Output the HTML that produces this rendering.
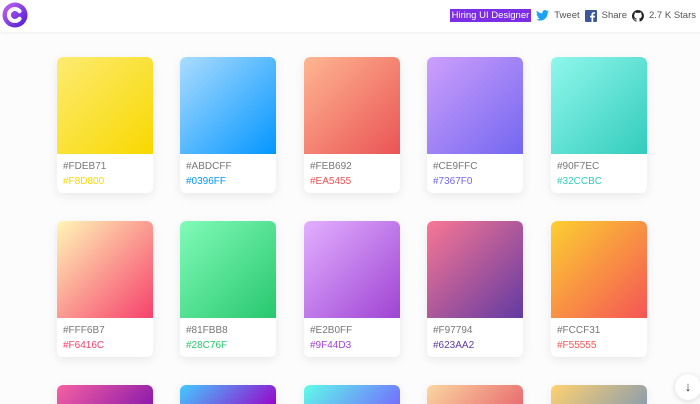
<!DOCTYPE html>
<html><head><meta charset="utf-8"><style>
html,body{margin:0;width:700px;height:404px;overflow:hidden}
body{background:#fcfcfd;font-family:"Liberation Sans",sans-serif}
.wrap{position:relative;width:700px;height:404px;overflow:hidden}
.hdr{position:absolute;left:0;top:0;width:700px;height:32px;background:#fff;box-shadow:0 1px 3px rgba(0,0,0,.06);z-index:2}
.logo{position:absolute;left:2px;top:2px}
.nav{position:absolute;right:4px;top:9px;font-size:9.5px;color:#555;display:flex;align-items:center;gap:5px}
.hire{background:#7b2ee6;color:#fff;padding:1px 2px}
.card{position:absolute;width:96px;height:136px;background:#fff;border-radius:6px;box-shadow:0 3px 10px rgba(0,0,0,.08);overflow:hidden}
.card.s{height:19px;border-radius:6px 6px 0 0}
.g{height:97px;border-radius:6px 6px 0 0}
.t{font-size:10px;line-height:15px;padding:5px 0 0 6px;color:#777}
.arrow{position:absolute;left:675px;top:374px;width:26px;height:26px;border-radius:50%;background:#fff;box-shadow:0 1px 6px rgba(0,0,0,.15);text-align:center;font-size:13px;line-height:26px;color:#333;z-index:3}
</style></head><body><div class="wrap">
<div class="hdr"><svg class="logo" width="26" height="26" viewBox="0 0 26 26"><defs><linearGradient id="lg" x1="0" y1="0" x2="1" y2="1"><stop offset="0" stop-color="#c86af5"/><stop offset="1" stop-color="#4a16d0"/></linearGradient></defs><circle cx="13" cy="13" r="12.5" fill="url(#lg)"/><path d="M17.5 9.2A6 6 0 1 0 17.5 16.8" fill="none" stroke="#fff" stroke-width="4" stroke-linecap="round"/></svg>
<div class="nav"><span class="hire">Hiring UI Designer</span>
<svg width="13" height="11" viewBox="0 0 24 20"><path fill="#1da1f2" d="M24 2.4a10 10 0 0 1-2.8.8A5 5 0 0 0 23.3.4a10 10 0 0 1-3.1 1.2A4.9 4.9 0 0 0 11.8 6 14 14 0 0 1 1.7.9a4.9 4.9 0 0 0 1.5 6.6A4.9 4.9 0 0 1 1 6.9a4.9 4.9 0 0 0 3.9 4.8 5 5 0 0 1-2.2.1 4.9 4.9 0 0 0 4.6 3.4A9.9 9.9 0 0 1 0 17.2 14 14 0 0 0 7.5 19.4c9.1 0 14-7.5 14-14v-.6A10 10 0 0 0 24 2.4z"/></svg><span>Tweet</span>
<svg width="12" height="12" viewBox="0 0 24 24"><rect width="24" height="24" rx="2" fill="#3b5998"/><path fill="#fff" d="M16.5 24v-9h3l.5-3.5h-3.5V9.3c0-1 .3-1.7 1.7-1.7h1.9V4.5a25 25 0 0 0-2.7-.1c-2.7 0-4.5 1.6-4.5 4.6v2.5H10V15h3v9z"/></svg><span>Share</span>
<svg width="12" height="12" viewBox="0 0 16 16"><path fill="#222" d="M8 0a8 8 0 0 0-2.5 15.6c.4 0 .5-.2.5-.4v-1.5c-2.2.5-2.7-1-2.7-1-.4-.9-.9-1.2-.9-1.2-.7-.5.1-.5.1-.5.8.1 1.2.8 1.2.8.7 1.3 1.9.9 2.3.7.1-.5.3-.9.5-1.1-1.8-.2-3.6-.9-3.6-4 0-.9.3-1.6.8-2.1-.1-.2-.4-1 .1-2.1 0 0 .7-.2 2.2.8a7.5 7.5 0 0 1 4 0c1.5-1 2.2-.8 2.2-.8.4 1.1.2 1.9.1 2.1.5.6.8 1.3.8 2.1 0 3.1-1.9 3.8-3.6 4 .3.3.6.8.6 1.5v2.2c0 .2.1.5.6.4A8 8 0 0 0 8 0z"/></svg><span>2.7 K Stars</span></div></div>

<div class="card" style="left:57px;top:57px"><div class="g" style="background:linear-gradient(135deg,#FDEB71,#F8D800)"></div><div class="t">#FDEB71<br><span style="color:#F8D800">#F8D800</span></div></div>
<div class="card" style="left:180px;top:57px"><div class="g" style="background:linear-gradient(135deg,#ABDCFF,#0396FF)"></div><div class="t">#ABDCFF<br><span style="color:#0396FF">#0396FF</span></div></div>
<div class="card" style="left:304px;top:57px"><div class="g" style="background:linear-gradient(135deg,#FEB692,#EA5455)"></div><div class="t">#FEB692<br><span style="color:#EA5455">#EA5455</span></div></div>
<div class="card" style="left:427px;top:57px"><div class="g" style="background:linear-gradient(135deg,#CE9FFC,#7367F0)"></div><div class="t">#CE9FFC<br><span style="color:#7367F0">#7367F0</span></div></div>
<div class="card" style="left:551px;top:57px"><div class="g" style="background:linear-gradient(135deg,#90F7EC,#32CCBC)"></div><div class="t">#90F7EC<br><span style="color:#32CCBC">#32CCBC</span></div></div>

<div class="card" style="left:57px;top:221px"><div class="g" style="background:linear-gradient(135deg,#FFF6B7,#F6416C)"></div><div class="t">#FFF6B7<br><span style="color:#F6416C">#F6416C</span></div></div>
<div class="card" style="left:180px;top:221px"><div class="g" style="background:linear-gradient(135deg,#81FBB8,#28C76F)"></div><div class="t">#81FBB8<br><span style="color:#28C76F">#28C76F</span></div></div>
<div class="card" style="left:304px;top:221px"><div class="g" style="background:linear-gradient(135deg,#E2B0FF,#9F44D3)"></div><div class="t">#E2B0FF<br><span style="color:#9F44D3">#9F44D3</span></div></div>
<div class="card" style="left:427px;top:221px"><div class="g" style="background:linear-gradient(135deg,#F97794,#623AA2)"></div><div class="t">#F97794<br><span style="color:#623AA2">#623AA2</span></div></div>
<div class="card" style="left:551px;top:221px"><div class="g" style="background:linear-gradient(135deg,#FCCF31,#F55555)"></div><div class="t">#FCCF31<br><span style="color:#F55555">#F55555</span></div></div>

<div class="card s" style="left:57px;top:385px;background:linear-gradient(135deg,#F761A1,#8C1BAB)"></div>
<div class="card s" style="left:180px;top:385px;background:linear-gradient(135deg,#43CBFF,#9708CC)"></div>
<div class="card s" style="left:304px;top:385px;background:linear-gradient(135deg,#5EFCE8,#736EFE)"></div>
<div class="card s" style="left:427px;top:385px;background:linear-gradient(135deg,#FAD7A1,#E96D71)"></div>
<div class="card s" style="left:551px;top:385px;background:linear-gradient(135deg,#FFD26F,#8E9EAB)"></div>

<div class="arrow">↓</div>
</div></body></html>
